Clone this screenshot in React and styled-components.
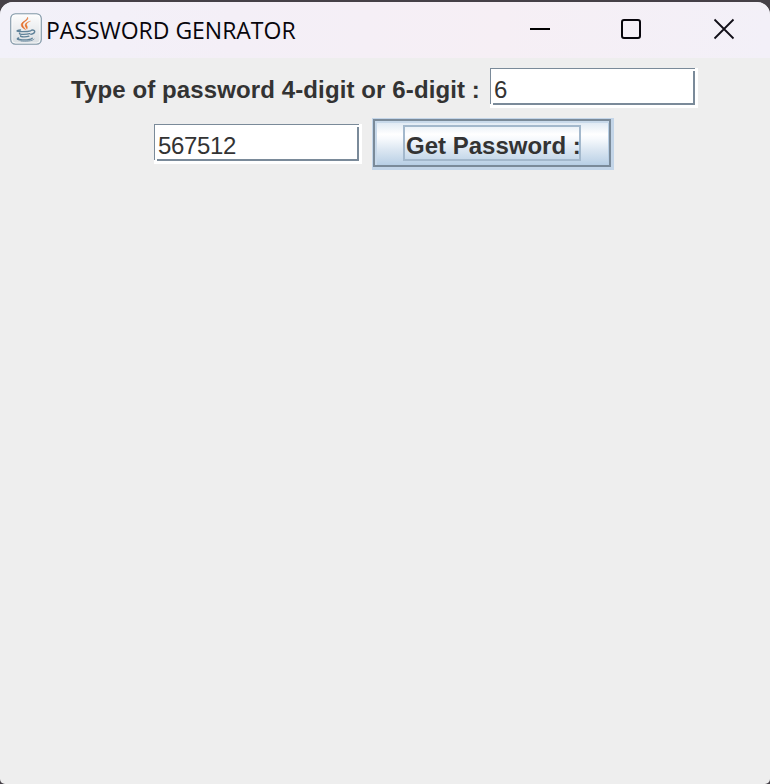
import React from "react";
import styled, { createGlobalStyle } from "styled-components";

const GlobalStyle = createGlobalStyle`
  body { margin: 0; background: #454047; overflow: hidden; }
  * { box-sizing: border-box; }
`;

const Window = styled.main`
  width: 770px;
  height: 784px;
  padding-top: 2px;
  background: #454047;
  font-family: "Liberation Sans", sans-serif;
`;

const Surface = styled.div`
  height: 782px;
  display: flex;
  flex-direction: column;
  overflow: hidden;
  border-radius: 13px 13px 5px 5px;
  background: #eeeeee;
`;

const TitleBar = styled.header`
  height: 56px;
  flex: none;
  display: flex;
  align-items: center;
  padding: 0 35px 2px 10px;
  background: linear-gradient(90deg, #f2f1f9 0%, #f4eff7 30%, #f6eff5 65%, #f3f0f8 100%);
`;

const Title = styled.h1`
  flex: 1;
  margin: 2px 0 0 4px;
  font: 400 23px/32px "Open Sans", "Noto Sans", sans-serif;
  letter-spacing: -0.02px;
  white-space: nowrap;
  color: #08060c;
`;

const Controls = styled.div`
  display: flex;
  gap: 70px;
  svg { display: block; }
`;

const Content = styled.section`
  display: flex;
  flex-direction: column;
  gap: 10px;
  padding-top: 10px;
`;

const Row = styled.div`
  display: flex;
  align-items: flex-start;
  padding-left: ${(p) => p.$indent}px;
`;

const Label = styled.label`
  width: 419px;
  font-weight: 700;
  font-size: 24px;
  letter-spacing: 0.11px;
  line-height: 40px;
  padding-top: 2px;
  height: 40px;
  color: #333333;
  white-space: nowrap;
`;

const Field = styled.input`
  width: 208px;
  height: 40px;
  margin: ${(p) => p.$top || 0}px 0 0;
  padding: 3px 6px 0 4px;
  border: 0;
  border-radius: 0;
  outline: 0;
  font: 400 24px/34px "Liberation Sans", sans-serif;
  letter-spacing: -0.35px;
  color: #333333;
  background:
    linear-gradient(#7a8a99, #7a8a99) 0 0 / 205px 1px no-repeat,
    linear-gradient(#7a8a99, #7a8a99) 0 0 / 1px 36px no-repeat,
    linear-gradient(#7a8a99, #7a8a99) 203px 3px / 2px 34px no-repeat,
    linear-gradient(#7a8a99, #7a8a99) 3px 35px / 202px 2px no-repeat,
    #ffffff;
`;

const Button = styled.button`
  width: 242px;
  height: 52px;
  margin: 0 0 0 10px;
  padding: 1px 3px 3px 1px;
  border: 0;
  background: #c3d5e8;
  font: 700 24px/36px "Liberation Sans", sans-serif;
  color: #333333;
`;

const ButtonFace = styled.span`
  display: flex;
  align-items: center;
  justify-content: center;
  width: 238px;
  height: 48px;
  border: 2px solid #7a8a99;
  box-shadow: inset 2px 2px 0 #c8d9ea, inset -1px -1px 0 #b8cfe5;
  background: linear-gradient(#dce7f2 0%, #ffffff 30%, #f7fafd 40%, #dce7f2 65%, #b8cfe5 100%);
`;

const FocusRing = styled.span`
  display: flex;
  width: 178px;
  height: 36px;
  padding: 5px 0 0 1px;
  border: 2px solid #a3b8cc;
  align-items: center;
  white-space: nowrap;
`;

function JavaIcon() {
  return (
    <svg width="32" height="32" viewBox="0 0 32 32" fill="none" aria-hidden="true">
      <defs>
        <linearGradient id="tile" x1="0" y1="0" x2="0" y2="1">
          <stop stopColor="#fdfdfd" />
          <stop offset="1" stopColor="#d9dee2" />
        </linearGradient>
      </defs>
      <rect x=".8" y=".8" width="30.4" height="30.4" rx="4.5" fill="url(#tile)" stroke="#8399a8" strokeWidth="1.3" />
      <rect x="2" y="2" width="28" height="28" rx="3.5" stroke="#fff" strokeWidth=".8" />
      <path d="M17.6 4.3c1.4 3.3-4.9 4.2-4.9 7.5 0 2 1.9 3 2.8 4.8-2.2-1.2-4.6-2.7-4.3-5 .4-3.3 6-3.7 6.4-7.3Z" fill="#e36b27" stroke="#e36b27" strokeWidth=".5" />
      <path d="M20.5 8.2c-2.1.7-4.1 1.9-3.9 3.5.1 1.2 1.7 2.1.3 4.6-.1-1.4-1.8-2.2-1.9-3.9-.1-2.2 2.5-3.8 5.5-4.2Z" fill="#e9782f" stroke="#e9782f" strokeWidth=".3" />
      <g stroke="#5f8299" strokeWidth="1.4" strokeLinecap="round">
        <path d="M10.5 17c-2.4.3-3.5.7-3.4 1.1.2.8 10 .8 13.7-.3" />
        <path d="M21.5 17.2c4.2-1 4.6 3-.6 4.2" />
        <path d="M9.6 20.2c-.9 1.5 6.4 1.5 10.2.4" />
        <path d="M10.6 22.8c-.6 1.3 5.7 1.3 8.3.4" />
        <path d="M8.6 25c-6 2 11 2.9 13.6.2" />
        <path d="M11 28c5 .6 11.3.1 13-1.8" strokeWidth=".8" />
      </g>
    </svg>
  );
}

function WindowControls() {
  return (
    <Controls>
      <svg width="22" height="22" viewBox="0 0 22 22"><path d="M1 11h20" stroke="#000" strokeWidth="2" /></svg>
      <svg width="22" height="22" viewBox="0 0 22 22"><rect x="1" y="2" width="18" height="18" rx="2" fill="none" stroke="#08060c" strokeWidth="2" /></svg>
      <svg width="22" height="22" viewBox="0 0 22 22"><path d="m1.5 1.5 19 19m0-19-19 19" fill="none" stroke="#110e18" strokeWidth="1.8" /></svg>
    </Controls>
  );
}

export default function App() {
  return (
    <>
      <GlobalStyle />
      <Window>
        <Surface>
          <TitleBar>
            <JavaIcon />
            <Title>PASSWORD GENRATOR</Title>
            <WindowControls />
          </TitleBar>
          <Content>
            <Row $indent={71}>
              <Label htmlFor="digits">Type of password 4-digit or 6-digit :</Label>
              <Field id="digits" defaultValue="6" />
            </Row>
            <Row $indent={154}>
              <Field $top={6} aria-label="Password" defaultValue="567512" />
              <Button type="button">
                <ButtonFace><FocusRing>Get Password :</FocusRing></ButtonFace>
              </Button>
            </Row>
          </Content>
        </Surface>
      </Window>
    </>
  );
}
